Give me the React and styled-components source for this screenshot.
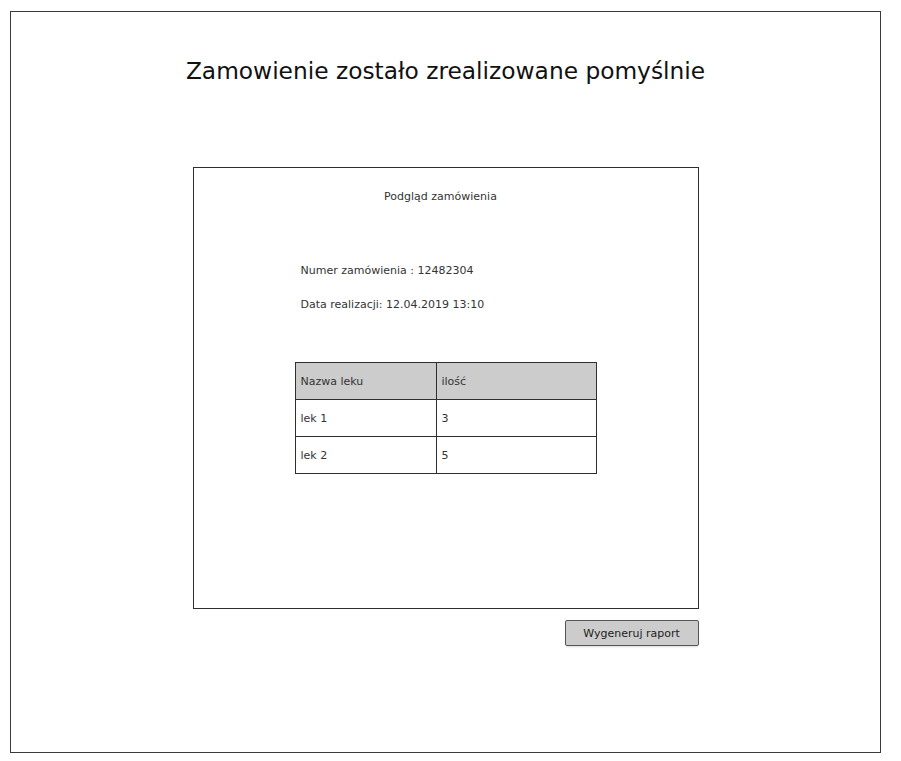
import React from 'react';
import styled, { createGlobalStyle } from 'styled-components';

const GlobalStyle = createGlobalStyle`
  body {
    margin: 0;
    background: #ffffff;
    font-family: 'DejaVu Sans', 'Noto Sans', sans-serif;
    color: #222;
  }
`;

const Frame = styled.div`
  box-sizing: border-box;
  margin: 11px 0 0 10px;
  width: 871px;
  height: 742px;
  border: 1px solid #3a3a3a;
  display: flex;
  flex-direction: column;
  align-items: center;
`;

const Title = styled.h1`
  margin: 44px 0 0;
  font-size: 23.3px;
  line-height: 30px;
  font-weight: normal;
  color: #111;
`;

const Content = styled.div`
  margin-top: 81px;
  width: 506px;
  display: flex;
  flex-direction: column;
`;

const Panel = styled.section`
  box-sizing: border-box;
  height: 442px;
  border: 1px solid #2e2e2e;
  padding: 21px 0 0 101px;
  display: flex;
  flex-direction: column;
`;

const PanelTitle = styled.div`
  margin-left: -101px;
  padding-right: 10px;
  text-align: center;
  font-size: 11px;
  line-height: 16px;
  color: #333;
`;

const Info = styled.div`
  margin: 58px 0 0 6px;
  display: flex;
  flex-direction: column;
  gap: 18px;
`;

const InfoLine = styled.div`
  font-size: 11px;
  line-height: 16px;
  color: #333;
`;

const Table = styled.table`
  margin-top: 49px;
  width: 302px;
  border-collapse: collapse;
  font-size: 11px;
  color: #333;
`;

const Cell = styled.td`
  height: 36px;
  padding: 0 0 0 5px;
  border: 1px solid #2e2e2e;
  text-align: left;
  background: ${p => (p.$head ? '#cccccc' : '#ffffff')};
  width: ${p => (p.$first ? '135px' : 'auto')};
`;

const ButtonRow = styled.div`
  margin-top: 11px;
  display: flex;
  justify-content: flex-end;
`;

const Button = styled.button`
  box-sizing: border-box;
  width: 134px;
  height: 26px;
  background: #cccccc;
  border: 1px solid #555;
  border-radius: 2px;
  font-family: inherit;
  font-size: 11px;
  color: #222;
  box-shadow: 0 2px 2px -1px rgba(0, 0, 0, 0.15);
`;

const rows = [
  ['lek 1', '3'],
  ['lek 2', '5'],
];

export default function App() {
  return (
    <>
      <GlobalStyle />
      <Frame>
        <Title>Zamowienie zostało zrealizowane pomyślnie</Title>
        <Content>
          <Panel>
            <PanelTitle>Podgląd zamówienia</PanelTitle>
            <Info>
              <InfoLine>Numer zamówienia : 12482304</InfoLine>
              <InfoLine>Data realizacji: 12.04.2019 13:10</InfoLine>
            </Info>
            <Table>
              <tbody>
                <tr>
                  <Cell $head $first>Nazwa leku</Cell>
                  <Cell $head>ilość</Cell>
                </tr>
                {rows.map(([name, qty]) => (
                  <tr key={name}>
                    <Cell $first>{name}</Cell>
                    <Cell>{qty}</Cell>
                  </tr>
                ))}
              </tbody>
            </Table>
          </Panel>
          <ButtonRow>
            <Button>Wygeneruj raport</Button>
          </ButtonRow>
        </Content>
      </Frame>
    </>
  );
}
